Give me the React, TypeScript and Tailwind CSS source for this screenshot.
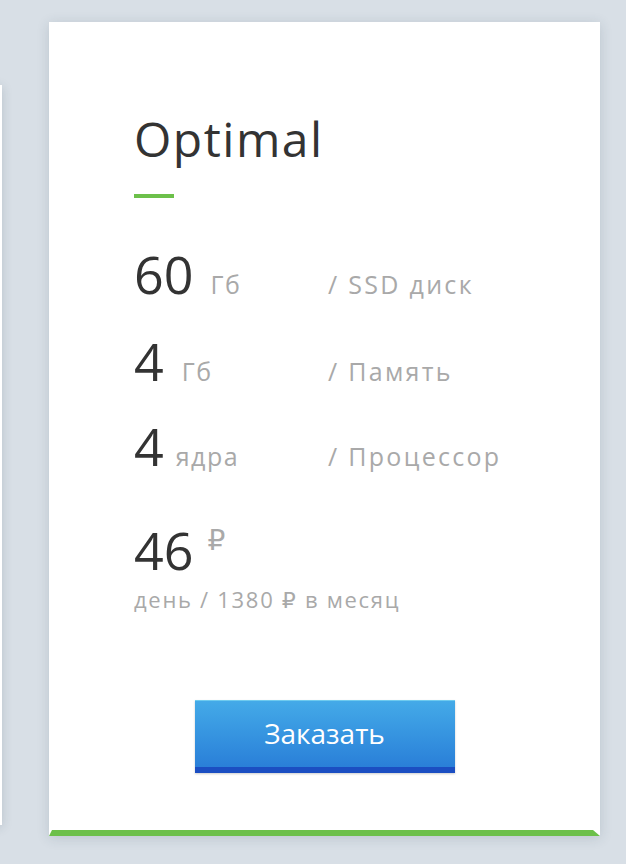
import React from "react";

const font = { fontFamily: '"Open Sans", "DejaVu Sans", sans-serif' };

function SpecRow({ value, unit, label, className, unitGap }: { value: string; unit: string; label: string; className?: string; unitGap: string }) {
  return (
    <div className={"flex items-baseline " + (className ?? "")}>
      <div className="flex w-[194px] shrink-0 items-baseline">
        <span className="text-[52px] leading-[52px] text-[#333333]">{value}</span>
        <span className={unitGap + " text-[25px] leading-[25px] tracking-[1.5px] text-[#a9a9a9]"}>{unit}</span>
      </div>
      <span className="text-[25px] leading-[25px] tracking-[2.3px] text-[#a9a9a9]">{label}</span>
    </div>
  );
}

export default function App() {
  return (
    <div className="h-[864px] w-[626px] overflow-hidden bg-[#d8dfe6]" style={font}>
      <div className="flex items-start">
        <div className="ml-[-549px] mt-[85px] h-[740px] w-[551px] shrink-0 bg-white shadow-[0_2px_10px_rgba(40,60,80,0.18)]" />
        <div className="ml-[47px] mt-[22px] flex w-[551px] shrink-0 flex-col bg-white pl-[85px] pt-[93px] shadow-[0_2px_12px_rgba(40,60,80,0.16)]">
          <h1 className="text-[48px] leading-[48px] font-normal tracking-[1.5px] text-[#333333]">Optimal</h1>
          <div className="mt-[31px] h-[4px] w-[40px] bg-[#6cc04a]" />
          <SpecRow className="mt-[50px]" unitGap="ml-[17px]" value="60" unit="Гб" label="/ SSD диск" />
          <SpecRow className="mt-[35px]" unitGap="ml-[18px]" value="4" unit="Гб" label="/ Память" />
          <SpecRow className="mt-[33px]" unitGap="ml-[12px]" value="4" unit="ядра" label="/ Процессор" />
          <div className="mt-[52px] flex items-start">
            <span className="text-[52px] leading-[52px] text-[#333333]">46</span>
            <span className="ml-[14px] mt-[1px] text-[28px] leading-[28px] text-[#a9a9a9]">₽</span>
          </div>
          <div className="mt-[13px] text-[22px] leading-[21px] tracking-[1.7px] text-[#a9a9a9]">день / 1380 ₽ в месяц</div>
          <div className="ml-[-85px] mt-[90px] flex justify-center">
            <button className="flex h-[73px] w-[260px] items-center justify-center border-t border-t-[#6fcbef] border-b-[6px] border-b-[#1b4ec2] bg-gradient-to-b from-[#44aae8] to-[#2a7fd8] pb-[2px] text-[28px] leading-[28px] text-white shadow-[0_1px_2px_rgba(0,0,0,0.2)]">
              Заказать
            </button>
          </div>
          <div className="ml-[-85px] mt-[57px] h-[6px] bg-[#6cc04a] [clip-path:polygon(3px_0,calc(100%-7px)_0,100%_100%,0_100%)]" />
        </div>
      </div>
    </div>
  );
}
